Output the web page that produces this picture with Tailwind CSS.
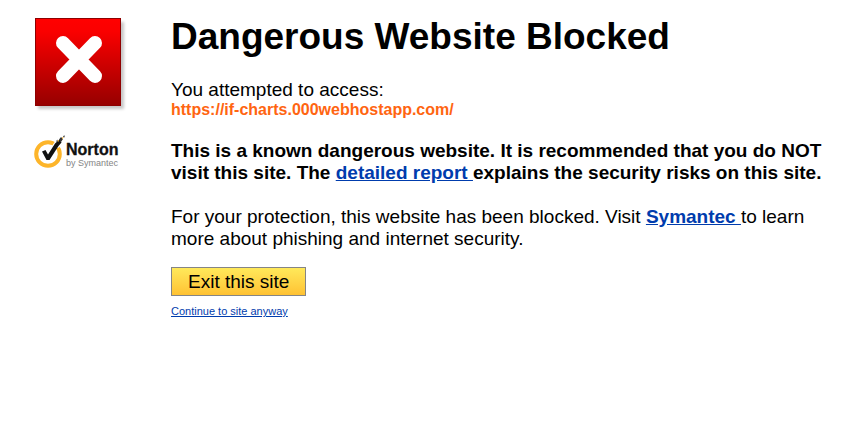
<!DOCTYPE html>
<html lang="en">
<head>
  <meta charset="UTF-8" />
  <meta name="viewport" content="width=device-width, initial-scale=1.0" />
  <title>Dangerous Website Blocked</title>
  <script src="https://cdn.jsdelivr.net/npm/@tailwindcss/browser@4"></script>
</head>
<body class="bg-white text-black font-['Liberation_Sans',Arial,sans-serif]">
  <div class="flex items-start gap-11 pl-[34px] pr-8 pt-[18px]">

    <!-- Warning icon and brand -->
    <aside class="shrink-0">
      <svg class="ml-px block" width="92" height="94" viewBox="0 0 92 94" role="img" aria-label="Blocked">
        <defs>
          <linearGradient id="red" x1="0" y1="0" x2="0" y2="1">
            <stop offset="0" stop-color="#ff0000" />
            <stop offset="0.15" stop-color="#fa0000" />
            <stop offset="1" stop-color="#960000" />
          </linearGradient>
          <filter id="soft" x="-10%" y="-10%" width="125%" height="125%">
            <feGaussianBlur stdDeviation="1.5" />
          </filter>
        </defs>
        <rect x="3" y="4" width="86" height="87" fill="#000" opacity="0.22" filter="url(#soft)" />
        <rect x="0.5" y="0.5" width="85" height="87" fill="url(#red)" stroke="#8e0000" />
        <path d="M28 25 60 58M60 25 28 58" stroke="#fff" stroke-width="14" stroke-linecap="round" />
      </svg>

      <svg class="mt-[22px] block" width="93" height="36" viewBox="0 0 93 36" role="img" aria-label="Norton by Symantec">
        <circle cx="14" cy="20" r="11.800" fill="none" stroke="#fdb52a" stroke-width="4" />
        <path d="M18 12 22 6 28 5 28 11 24 14Z" fill="#fff" />
        <path d="M8 17.500 11.500 16 14 20.500 21 9.500 25.500 5.500 27.500 8.500 24.500 12 15.500 26 12.500 26Z" fill="#111" />
        <path d="M25 5.500 27 3 29 5 27 8ZM29 2 31 1.500 30 4ZM22 7 24 5.500 23 8Z" fill="#333" />
        <path d="M23.500 6.500 25 6 24.500 8ZM28 3.500 29.500 3 28.500 5.500Z" fill="#fdb52a" />
        <text x="32" y="21" font-size="16" font-weight="700" fill="#111" stroke="#111" stroke-width="0.3">Norton</text>
        <text x="32" y="32" font-size="9" fill="#858585">by Symantec</text>
      </svg>
    </aside>

    <!-- Message -->
    <main class="min-w-0 flex-1 text-[19px] leading-[22px]">
      <h1 class="text-[37px] leading-[38px] font-bold">Dangerous Website Blocked</h1>

      <p class="mt-[23px]">You attempted to access:</p>
      <p class="text-base leading-[18px] font-bold text-[#ff6511] break-words">https://if-charts.000webhostapp.com/</p>

      <p class="mt-[21px] font-bold">
        This is a known dangerous website. It is recommended that you do NOT
        visit this site. The <a href="#report" class="text-[#003cad] underline">detailed report </a>explains the security risks on this site.
      </p>

      <p class="mt-[22px]">
        For your protection, this website has been blocked. Visit
        <a href="#symantec" class="font-bold text-[#003cad] underline">Symantec </a>to learn
        more about phishing and internet security.
      </p>

      <button type="button" class="mt-[17px] block border border-[#858585] bg-linear-to-b from-[#ffe95a] to-[#ffc232] px-4 py-[2px] text-[19px] leading-[23px]">Exit this site</button>
      <a href="#continue" class="mt-[7px] block w-fit text-[11px] leading-4 text-[#003cad] underline">Continue to site anyway</a>
    </main>
  </div>
</body>
</html>
